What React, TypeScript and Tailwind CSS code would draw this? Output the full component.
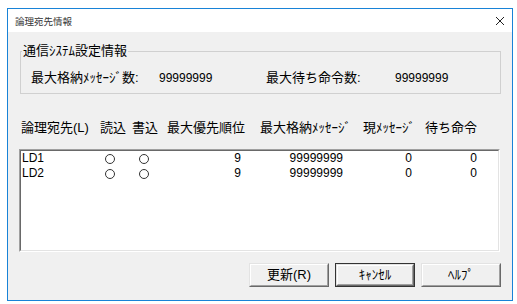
import React from "react";

function Circle() {
  return <span className="block w-[10px] h-[10px] rounded-full border border-[#333]" />;
}

function Btn({ label, def }: { label: string; def?: boolean }) {
  return (
    <div className={def ? "w-[80px] h-[24px] border border-[#333]" : "w-[80px] h-[24px]"}>
      <div className="w-full h-full border border-t-[#e3e3e3] border-l-[#e3e3e3] border-b-[#696969] border-r-[#696969]">
        <div className="w-full h-full border border-t-white border-l-white border-b-[#a0a0a0] border-r-[#a0a0a0] bg-[#f0f0f0] flex items-center justify-center text-[13px] leading-[16px]">
          {label}
        </div>
      </div>
    </div>
  );
}

const rows = [
  { name: "LD1", pr: "9", max: "99999999", cur: "0", wait: "0" },
  { name: "LD2", pr: "9", max: "99999999", cur: "0", wait: "0" },
];

export default function App() {
  return (
    <div className="w-[517px] h-[304px] bg-white pl-[7px] pt-[8px] font-['Liberation_Sans','Noto_Sans_CJK_JP',sans-serif] text-black">
      <div className="w-[506px] h-[293px] border border-[#1883d7] flex flex-col">
        <div className="h-[23px] shrink-0 bg-white flex items-center justify-between pl-[7px] pr-[7px]">
          <span className="text-[9.5px] leading-[12px] text-[#333] font-['Noto_Sans_CJK_JP',sans-serif]">論理宛先情報</span>
          <svg width="10" height="10" viewBox="0 0 10 10" className="mr-[0px]">
            <path d="M1 1 L9 9 M9 1 L1 9" stroke="#222" strokeWidth="1" fill="none" />
          </svg>
        </div>
        <div className="flex-1 bg-[#f0f0f0] pl-[12px] pr-[11px] pt-[11px] text-[13px] leading-[16px] flex flex-col">
          <fieldset className="w-[481px] h-[51px] border border-[#d0d0d0]">
            <legend className="ml-[1px] px-[1px] leading-[16px]">通信ｼｽﾃﾑ設定情報</legend>
            <div className="flex pl-[10px] mt-[11px] leading-[16px]">
              <span className="w-[128px]">最大格納ﾒｯｾｰｼﾞ数:</span>
              <span className="w-[107px] text-[12px]">99999999</span>
              <span className="w-[129px]">最大待ち命令数:</span>
              <span className="text-[12px]">99999999</span>
            </div>
          </fieldset>

          <div className="flex mt-[26px] pl-[1px] leading-[16px]">
            <span className="w-[79px]">論理宛先(L)</span>
            <span className="w-[32px]">読込</span>
            <span className="w-[35px]">書込</span>
            <span className="w-[93px]">最大優先順位</span>
            <span className="w-[103px]">最大格納ﾒｯｾｰｼﾞ</span>
            <span className="w-[62px]">現ﾒｯｾｰｼﾞ</span>
            <span>待ち命令</span>
          </div>

          <div className="mt-[13px] ml-[-1px] w-[481px] h-[103px] border border-t-[#a0a0a0] border-l-[#a0a0a0] border-b-white border-r-white">
            <div className="w-full h-full border border-t-[#696969] border-l-[#696969] border-b-[#e3e3e3] border-r-[#e3e3e3] bg-white pt-[0px] text-[12px] leading-[15px]">
              {rows.map((r) => (
                <div key={r.name} className="flex items-center h-[15px]">
                  <span className="w-[84px] pl-[1px]">{r.name}</span>
                  <Circle />
                  <span className="w-[24px]" />
                  <Circle />
                  <span className="w-[92px] text-right">{r.pr}</span>
                  <span className="w-[102px] text-right">{r.max}</span>
                  <span className="w-[69px] text-right">{r.cur}</span>
                  <span className="w-[65px] text-right">{r.wait}</span>
                </div>
              ))}
            </div>
          </div>

          <div className="mt-[11px] flex justify-end gap-[6px]">
            <Btn label="更新(R)" />
            <Btn label="ｷｬﾝｾﾙ" def />
            <Btn label="ﾍﾙﾌﾟ" />
          </div>
        </div>
      </div>
    </div>
  );
}
